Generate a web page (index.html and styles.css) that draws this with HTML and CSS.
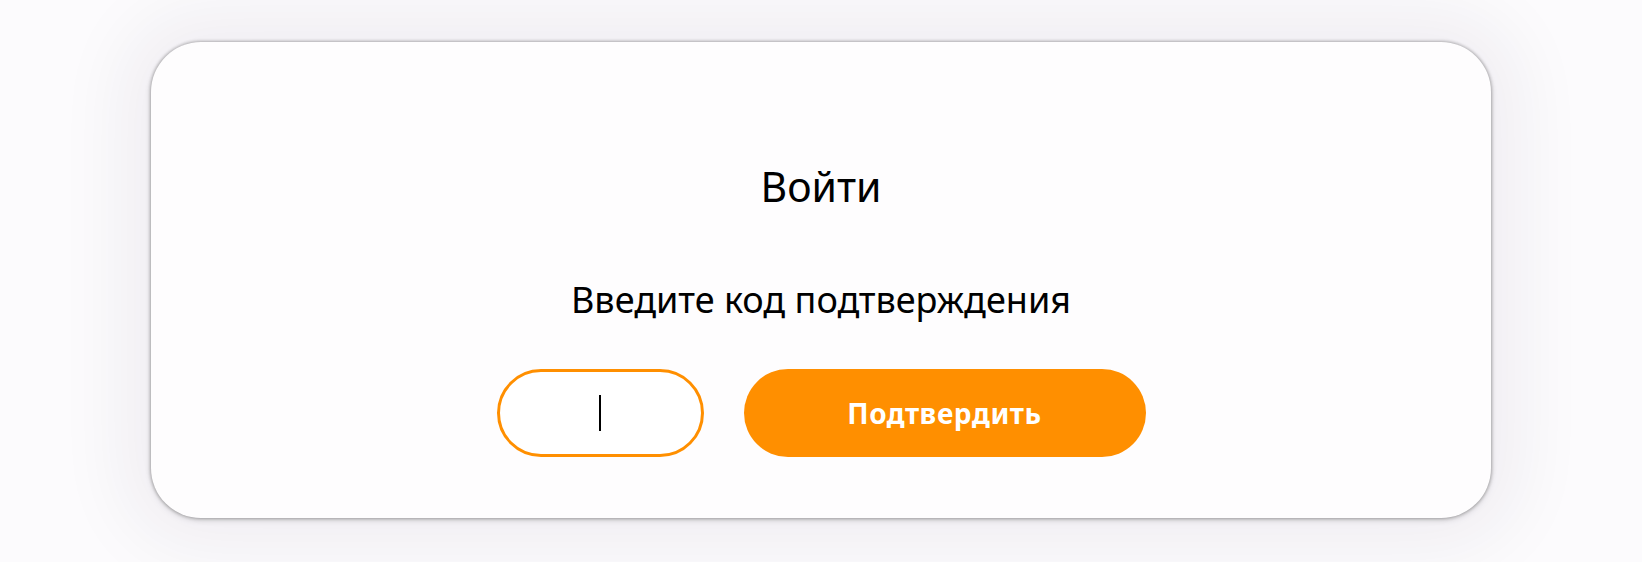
FILE: index.html
```html
<!DOCTYPE html>
<html lang="ru">
<head>
<meta charset="utf-8">
<title>Войти</title>
<link rel="stylesheet" href="styles.css">
</head>
<body>
<main class="page">
  <section class="card">
    <h1 class="title">Войти</h1>
    <p class="subtitle">Введите код подтверждения</p>
    <div class="row">
      <div class="code-input"><span class="caret"></span></div>
      <button class="confirm" type="button">Подтвердить</button>
    </div>
  </section>
</main>
</body>
</html>
```
FILE: styles.css
```css
html, body {
  margin: 0;
  padding: 0;
  background: #fcfbfd;
  width: 1642px;
  height: 562px;
  overflow: hidden;
  font-family: "Noto Sans", "Liberation Sans", sans-serif;
}
.page {
  display: flex;
  justify-content: center;
  padding-top: 42px;
}
.card {
  width: 1340px;
  height: 476px;
  box-sizing: border-box;
  background: #fefdfe;
  border-radius: 50px;
  box-shadow: 0 0 3px 1px rgba(0,0,0,0.24), 0 2px 6px rgba(0,0,0,0.16), 0 0 70px 30px rgba(40,20,60,0.055);
  display: flex;
  flex-direction: column;
  align-items: center;
  padding-top: 119px;
}
.title {
  margin: 0;
  font-weight: 400;
  font-size: 41px;
  line-height: 51px;
  color: #000;
}
.subtitle {
  margin: 66px 0 0;
  font-size: 36px;
  line-height: 44px;
  color: #000;
}
.row {
  display: flex;
  gap: 40px;
  margin-top: 47px;
}
.code-input {
  width: 207px;
  height: 88px;
  box-sizing: border-box;
  border: 3.5px solid #ff8f00;
  border-radius: 44px;
  background: #fff;
  display: flex;
  align-items: center;
  justify-content: center;
}
.caret {
  width: 2px;
  height: 36px;
  background: #000;
}
.confirm {
  width: 402px;
  height: 88px;
  border: none;
  border-radius: 44px;
  background: #ff8f00;
  color: #fff;
  font-family: "Noto Sans", "Liberation Sans", sans-serif;
  font-weight: 700;
  font-size: 28px;
  letter-spacing: 0.6px;
  padding: 0;
}
```
